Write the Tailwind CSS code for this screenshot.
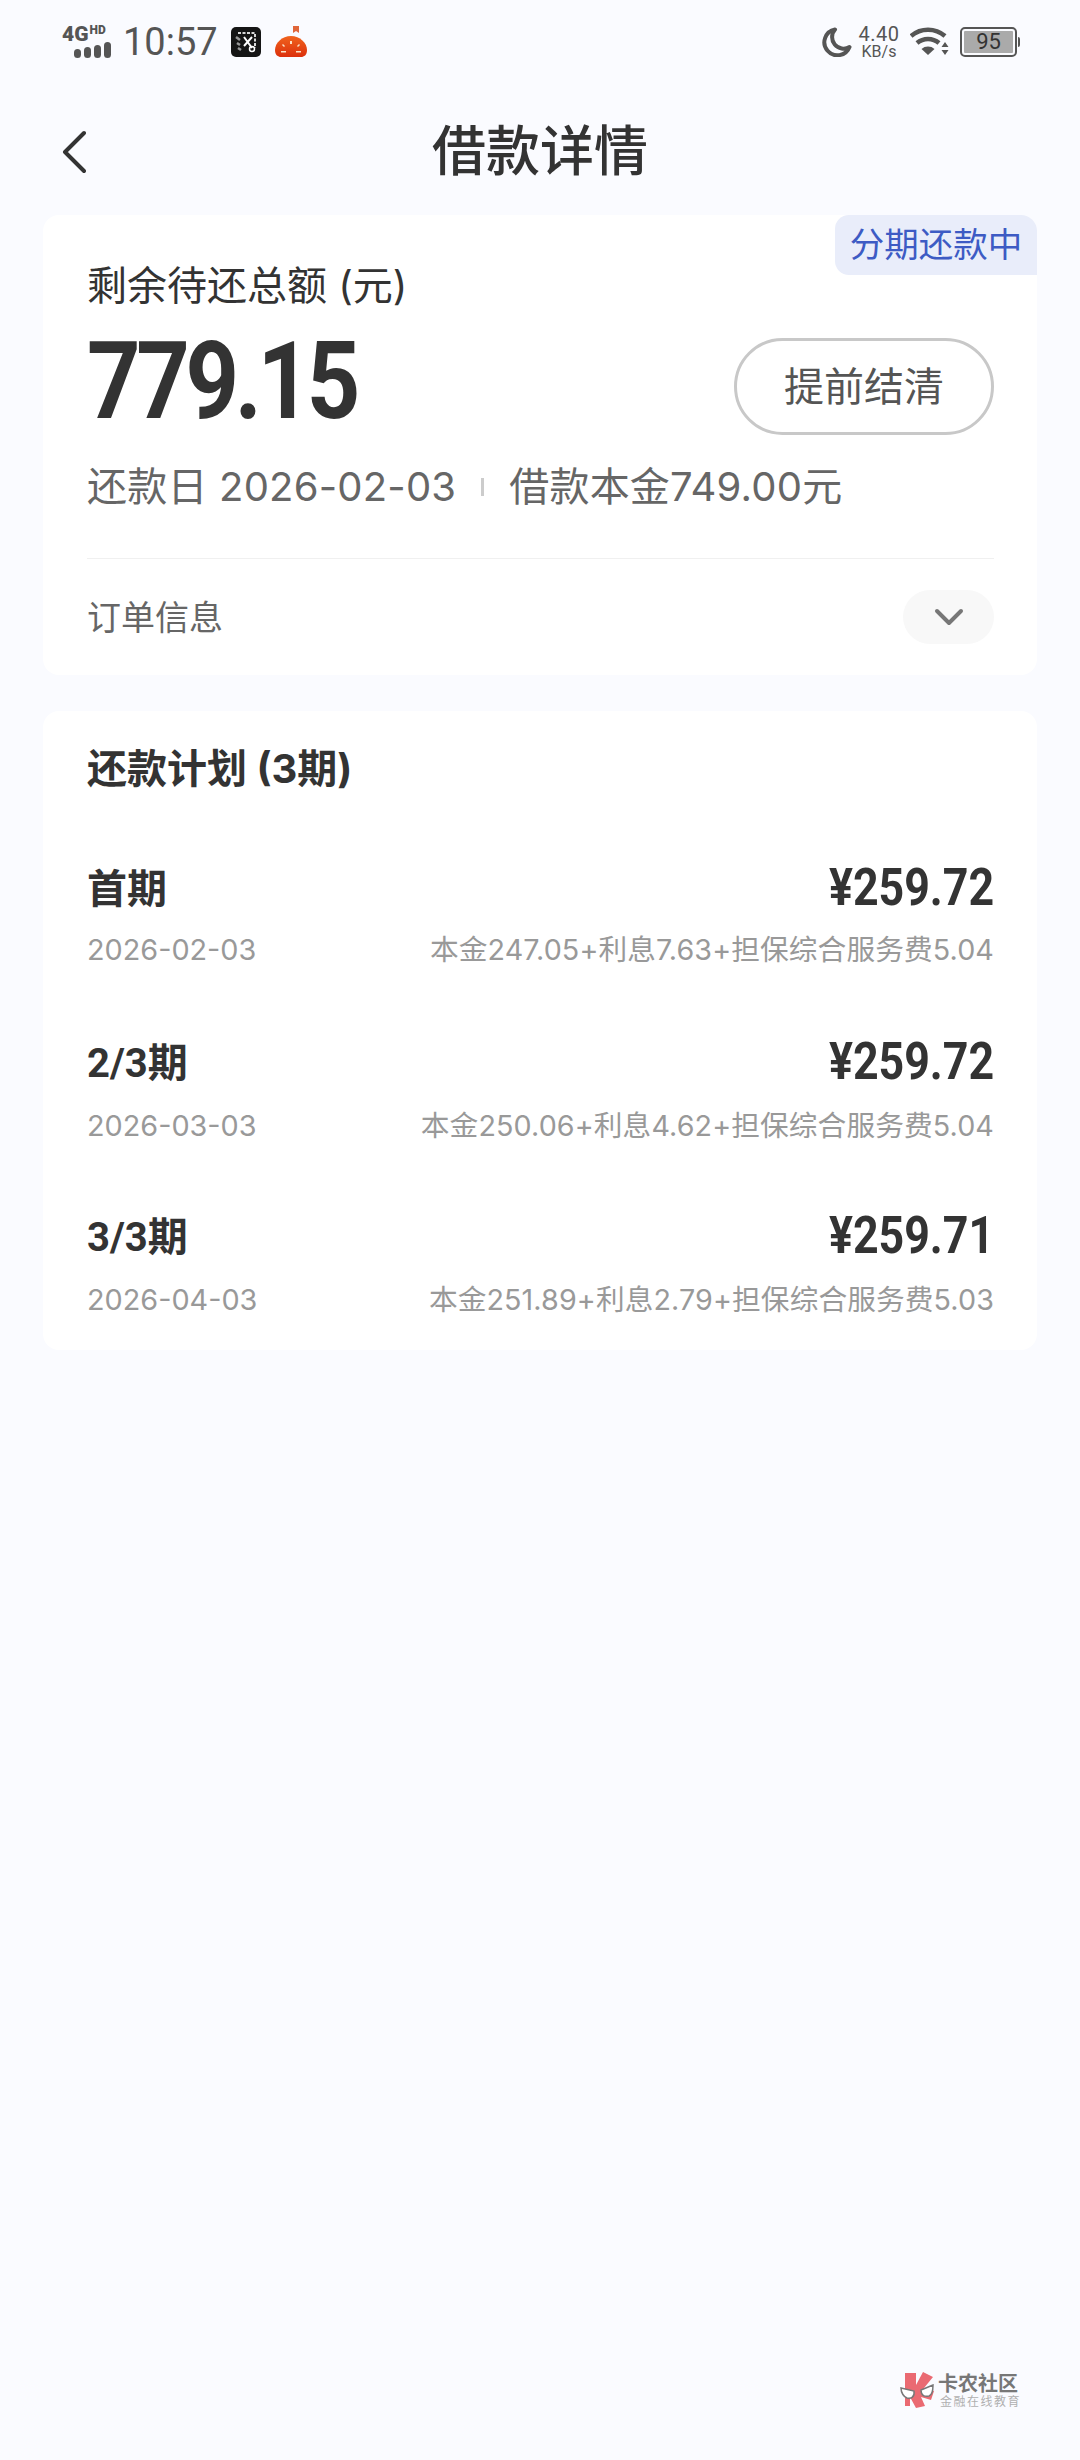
<!DOCTYPE html>
<html lang="zh-CN">
<head>
  <meta charset="UTF-8">
  <meta name="viewport" content="width=device-width, initial-scale=1.0">
  <title>借款详情</title>
  <script src="https://cdn.jsdelivr.net/npm/@tailwindcss/browser@4"></script>
</head>
<body class="bg-[#fafbff]">
  <div class="relative w-[1080px] h-[2460px] overflow-hidden bg-[#fafbff] font-['Inter','Noto_Sans_CJK_SC',sans-serif] text-[#333]">

    <!-- status bar -->
    <div class="h-[88px] pl-[62px] pr-[60px] pt-[24px] flex justify-between items-start">
      <div class="flex items-start">
        <div class="w-[50px] flex flex-col font-['Roboto'] font-black text-[#555]">
          <div class="flex items-start h-[20px]">
            <span class="text-[21px] leading-[20px]">4G</span>
            <span class="ml-[1px] text-[12px] leading-[12px]">HD</span>
          </div>
          <div class="-mt-[3px] h-[17px] flex items-end justify-end gap-[3px] pr-[1px]">
            <div class="w-[7px] h-[9px] rounded-full bg-[#555]"></div>
            <div class="w-[7px] h-[11px] rounded-full bg-[#555]"></div>
            <div class="w-[7px] h-[13px] rounded-full bg-[#555]"></div>
            <div class="w-[7px] h-[16px] rounded-full bg-[#555]"></div>
          </div>
        </div>
        <span class="ml-[11px] font-['Roboto'] text-[38px] leading-[36px] text-[#555]">10:57</span>
        <svg width="30" height="30" viewBox="0 0 30 30" class="ml-[13px] mt-[3px]">
          <rect width="30" height="30" rx="5" fill="#151515"/>
          <path d="M7 6h17v15" stroke="#d8d8d8" stroke-width="2" stroke-dasharray="3 1.500" fill="none"/>
          <path d="M5 10l4 3m-3 3l3 2m-2 3l3 2" stroke="#999" stroke-width="2.500" fill="none"/>
          <path d="M13 10l8 11M21 10l-8 9" stroke="#fff" stroke-width="2" fill="none"/>
          <circle cx="21" cy="22" r="2.500" fill="none" stroke="#fff" stroke-width="1.500"/>
        </svg>
        <svg width="34" height="32" viewBox="0 0 34 32" class="ml-[13px] mt-[2px]">
          <defs>
            <linearGradient id="pumpkin" x1="0" y1="0" x2="0" y2="1">
              <stop offset="0" stop-color="#f0641e"/>
              <stop offset="1" stop-color="#dc2f0c"/>
            </linearGradient>
          </defs>
          <path d="M19 0h6v7l-3-2-3 2z" fill="#e0663a"/>
          <path d="M17 10c9 0 16 7 16 14 0 5-3 7-6 7H7c-3 0-6-2-6-7 0-7 7-14 16-14z" fill="url(#pumpkin)"/>
          <path d="M16 15h2v3h-2zM9 18l2 2-1 1-2-2zM25 18l-2 2 1 1 2-2zM7 25h5v1.500H7zM22 25h5v1.500h-5z" fill="#fbe3c8"/>
        </svg>
      </div>
      <div class="flex items-start">
        <svg width="30" height="30" viewBox="0 0 30 30" class="mt-[3px]">
          <path d="M13 2.500A13 13 0 1 0 27.500 20 11.500 11.500 0 0 1 13 2.500z" fill="none" stroke="#555" stroke-width="4" stroke-linejoin="round"/>
        </svg>
        <div class="ml-[6px] w-[42px] flex flex-col items-center font-['Roboto'] text-[#555]">
          <span class="text-[20px] leading-[20px] tracking-[0.5px]">4.40</span>
          <span class="text-[16px] leading-[15px]">KB/s</span>
        </div>
        <svg width="40" height="30" viewBox="0 0 40 30" class="ml-[10px] mt-[3px]">
          <path d="M1 9a26 26 0 0 1 34 0" fill="none" stroke="#555" stroke-width="4.500"/>
          <path d="M7 16a17 17 0 0 1 22 0" fill="none" stroke="#555" stroke-width="4.500"/>
          <path d="M18 28l-6.500-6a10 10 0 0 1 13 0z" fill="#555"/>
          <path d="M35 15l3.500 5h-7zM35 28l-3.500-5h7z" fill="#555"/>
        </svg>
        <div class="ml-[10px] mt-[3px] flex items-center">
          <div class="w-[57px] h-[30px] rounded-[5px] border-[2.5px] border-[#555] p-[2px]">
            <div class="h-full bg-[#aaa] rounded-[1px] flex items-center justify-center font-['Roboto'] text-[22px] leading-none text-[#333]">95</div>
          </div>
          <div class="w-[2px] h-[10px] ml-[1px] bg-[#555] rounded-r-[2px]"></div>
        </div>
      </div>
    </div>

    <!-- title bar -->
    <div class="h-[127px] grid grid-cols-[1fr_auto_1fr] items-center pl-[62px]">
      <svg width="24" height="44" viewBox="0 0 24 44">
        <path d="M22 3L3 22l19 19" fill="none" stroke="#333" stroke-width="4" stroke-linecap="round" stroke-linejoin="round"/>
      </svg>
      <h1 class="text-[54px] leading-[60px] font-medium text-[#333] -translate-x-[31px]">借款详情</h1>
      <div></div>
    </div>

    <!-- loan summary -->
    <div class="relative mx-[43px] h-[460px] bg-white rounded-[16px] pl-[44px] pr-[43px] pt-[50px]">
      <div class="absolute right-0 top-0 w-[202px] h-[60px] bg-[#e9edfa] rounded-bl-[14px] rounded-tr-[16px] rounded-tl-[14px] flex items-center justify-center text-[34.5px] text-[#3d5bc4]">分期还款中</div>
      <div class="h-[42px] text-[40px] leading-[42px] text-[#333]">剩余待还总额 (元)</div>
      <div class="mt-[31px] h-[97px] flex justify-between items-center">
        <span class="origin-left scale-x-[0.865] font-['Roboto'] font-bold text-[108px] leading-[97px] tracking-[-5px] -translate-y-[5px] text-[#333]">779.15</span>
        <button class="w-[260px] h-[97px] rounded-full border-[3px] border-[#c8c8c8] text-[40px] text-[#555]">提前结清</button>
      </div>
      <div class="mt-[30px] h-[44px] flex items-center text-[40px] leading-[44px] tracking-[0.2px] text-[#666]">
        <span>还款日 2026-02-03</span>
        <span class="ml-[25px] w-[3px] h-[18px] bg-[#ccc]"></span>
        <span class="ml-[25px]">借款本金749.00元</span>
      </div>
      <div class="mt-[49px] h-px bg-[#f0f0f0]"></div>
      <div class="h-[116px] flex justify-between items-center">
        <span class="text-[34px] text-[#666]">订单信息</span>
        <div class="w-[91px] h-[54px] rounded-full bg-[#f8f8f8] flex items-center justify-center">
          <svg width="30" height="18" viewBox="0 0 30 18">
            <path d="M3 3l12 12L27 3" fill="none" stroke="#777" stroke-width="4" stroke-linecap="round" stroke-linejoin="round"/>
          </svg>
        </div>
      </div>
    </div>

    <!-- repayment plan -->
    <div class="mx-[43px] mt-[36px] h-[639px] bg-white rounded-[16px] pl-[44px] pr-[43px] pt-[36px]">
      <div class="h-[44px] text-[40px] leading-[44px] font-bold text-[#333]">还款计划 (3期)</div>

      <div class="mt-[67px] h-[174px]">
        <div class="h-[60px] flex justify-between items-center">
          <span class="font-['Roboto','Noto_Sans_CJK_SC',sans-serif] text-[40px] font-bold translate-y-[2px]">首期</span>
          <span class="origin-right scale-x-[0.86] font-['Roboto'] font-bold text-[52px]">¥259.72</span>
        </div>
        <div class="mt-[12px] h-[40px] flex justify-between items-center text-[#999]">
          <span class="text-[28.8px]">2026-02-03</span>
          <span class="text-[28.7px] tracking-[0.1px]">本金247.05+利息7.63+担保综合服务费5.04</span>
        </div>
      </div>

      <div class="h-[174px]">
        <div class="h-[60px] flex justify-between items-center">
          <span class="font-['Roboto','Noto_Sans_CJK_SC',sans-serif] text-[40px] font-bold translate-y-[2px]">2/3期</span>
          <span class="origin-right scale-x-[0.86] font-['Roboto'] font-bold text-[52px]">¥259.72</span>
        </div>
        <div class="mt-[14px] h-[40px] flex justify-between items-center text-[#999]">
          <span class="text-[28.8px]">2026-03-03</span>
          <span class="text-[28.7px] tracking-[0.1px]">本金250.06+利息4.62+担保综合服务费5.04</span>
        </div>
      </div>

      <div class="h-[174px]">
        <div class="h-[60px] flex justify-between items-center">
          <span class="font-['Roboto','Noto_Sans_CJK_SC',sans-serif] text-[40px] font-bold translate-y-[2px]">3/3期</span>
          <span class="origin-right scale-x-[0.86] font-['Roboto'] font-bold text-[52px]">¥259.71</span>
        </div>
        <div class="mt-[14px] h-[40px] flex justify-between items-center text-[#999]">
          <span class="text-[28.8px]">2026-04-03</span>
          <span class="text-[28.7px] tracking-[0.1px]">本金251.89+利息2.79+担保综合服务费5.03</span>
        </div>
      </div>
    </div>

    <!-- watermark -->
    <div class="absolute left-[900px] top-[2372px] flex items-start">
      <svg width="36" height="36" viewBox="0 0 36 36">
        <path d="M5 1h11v12l7-13 10 5-9 11 10 3-3 9-10-3 4 9-9 2-6-11v9H5z" fill="#ea6a72"/>
        <path d="M1 16l13 3c1 6-3 8-7 7-3-1-6-5-6-10zM33 13l-12 5c0 6 4 7 8 6 3-1 4-6 4-11z" fill="#fff" stroke="#777" stroke-width="1.500"/>
      </svg>
      <div class="ml-[2px] flex flex-col">
        <span class="text-[20px] leading-[24px] font-bold text-[#777]">卡农社区</span>
        <span class="mt-[-1px] ml-[2px] text-[12px] leading-[14px] tracking-[1.500px] text-[#b0b0b0]">金融在线教育</span>
      </div>
    </div>
  </div>
</body>
</html>
